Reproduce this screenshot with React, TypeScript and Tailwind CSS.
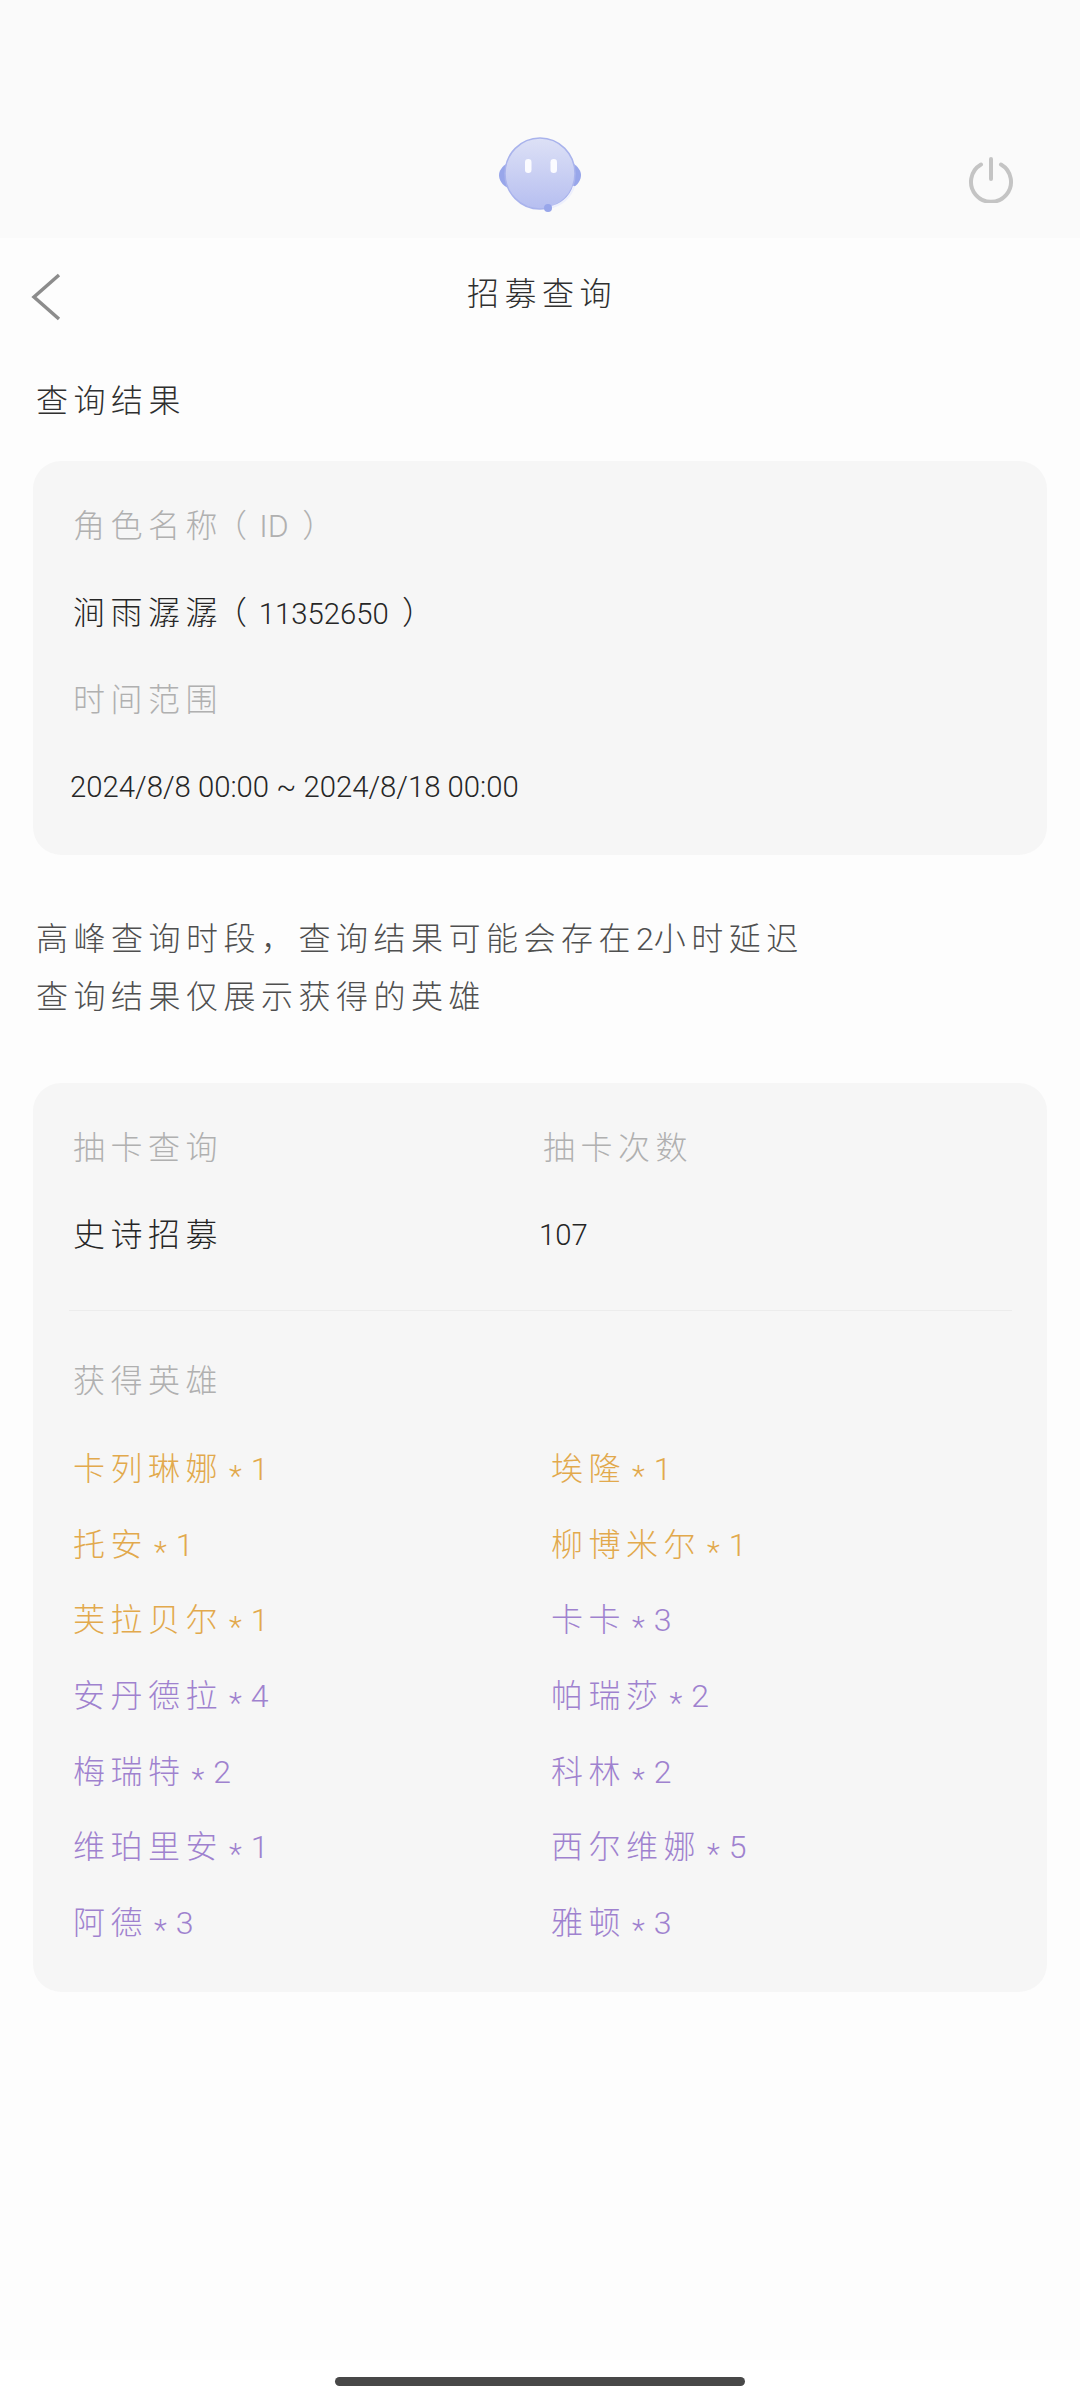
const heroes = [
  { name: '卡列琳娜', count: 1, gold: true },
  { name: '埃隆', count: 1, gold: true },
  { name: '托安', count: 1, gold: true },
  { name: '柳博米尔', count: 1, gold: true },
  { name: '芙拉贝尔', count: 1, gold: true },
  { name: '卡卡', count: 3, gold: false },
  { name: '安丹德拉', count: 4, gold: false },
  { name: '帕瑞莎', count: 2, gold: false },
  { name: '梅瑞特', count: 2, gold: false },
  { name: '科林', count: 2, gold: false },
  { name: '维珀里安', count: 1, gold: false },
  { name: '西尔维娜', count: 5, gold: false },
  { name: '阿德', count: 3, gold: false },
  { name: '雅顿', count: 3, gold: false },
]

function BotLogo() {
  return (
    <svg width="84" height="78" viewBox="0 0 84 78" className="blur-[0.6px]">
      <defs>
        <linearGradient id="head" x1="0" y1="0" x2="0" y2="1">
          <stop offset="0" stopColor="#dde1f6" />
          <stop offset="1" stopColor="#b6bef0" />
        </linearGradient>
      </defs>
      <path d="M10 28C4 31 1 36 1 40c0 5 3 10 9 13z" fill="#98a6ea" />
      <path d="M74 28c6 3 9 8 9 12 0 5-3 10-9 13z" fill="#98a6ea" />
      <ellipse cx="42" cy="38.5" rx="35" ry="35.5" fill="url(#head)" stroke="#a9b3ec" strokeWidth="1.5" />
      <rect x="27" y="24" width="6.5" height="14" rx="3.2" fill="#fbfbff" />
      <rect x="52.5" y="24" width="6.5" height="14" rx="3.2" fill="#fbfbff" />
      <path d="M76 51c-3 11-13 20-26 22" fill="none" stroke="#eef0fc" strokeWidth="2.2" />
      <circle cx="50" cy="73" r="4" fill="#98a6ea" />
    </svg>
  )
}

function PowerIcon() {
  return (
    <svg width="48" height="48" viewBox="0 0 48 48" fill="none" stroke="#c4c4c4" strokeWidth="4" strokeLinecap="round">
      <path d="M24 4v20" />
      <path d="M14 9.5a20 20 0 1 0 20 0" />
    </svg>
  )
}

function BackIcon() {
  return (
    <svg width="30" height="48" viewBox="0 0 30 48" fill="none" stroke="#8c8c8c" strokeWidth="3.5">
      <path d="M28 2 3 24l25 22" />
    </svg>
  )
}

function Num({ children }: { children: React.ReactNode }) {
  return <span className="tracking-normal">{children}</span>
}

export default function App() {
  return (
    <div className="flex h-[2403px] w-[1080px] flex-col overflow-hidden bg-[#fdfdfd] font-['Roboto','Noto_Sans_CJK_SC',sans-serif] text-[32px] font-light tracking-[5.5px] text-[#262626]">
      <header className="grid h-[238px] grid-cols-3 bg-[#fafafa] pt-[135px]">
        <div />
        <div className="flex justify-center">
          <BotLogo />
        </div>
        <div className="flex justify-end pt-[20px] pr-[65px]">
          <PowerIcon />
        </div>
      </header>

      <div className="relative flex h-[116px] items-center justify-center pb-[4px] pl-[4px] text-[#2f2f2f]">
        <div className="absolute top-[35px] left-[31px]">
          <BackIcon />
        </div>
        招募查询
      </div>

      <div className="flex-1 px-[33px]">
        <h2 className="mb-[13px] pl-[3px] leading-[94px] font-light text-[#2f2f2f]">查询结果</h2>

        <section className="h-[394px] rounded-[28px] bg-[#f6f6f6] pt-[22px] pl-[40px]">
          <div className="h-[87px] leading-[87px] text-[#b0b0b0]">
            角色名称<span className="ml-[8px] [font-feature-settings:'halt']">（</span>
            <span className="ml-[-1px] tracking-normal"> ID</span> ）
          </div>
          <div className="h-[87px] leading-[87px]">
            涧雨潺潺<span className="ml-[8px] [font-feature-settings:'halt']">（</span>
            <span className="ml-[-1px] text-[29.3px] tracking-normal"> 11352650</span> ）
          </div>
          <div className="h-[87px] leading-[87px] text-[#b0b0b0]">时间范围</div>
          <div className="-ml-[3px] h-[87px] text-[29.3px] leading-[87px] tracking-normal">
            2024/8/8 00:00 ~ 2024/8/18 00:00
          </div>
        </section>

        <div className="mt-[55px] pl-[3px] leading-[58px] text-[#4f4f4f]">
          <p>
            高峰查询时段，查询结果可能会存在<Num>2</Num>小时延迟
          </p>
          <p>查询结果仅展示获得的英雄</p>
        </div>

        <section className="mt-[57px] h-[909px] rounded-[28px] bg-[#f6f6f6] pt-[22px] pl-[40px]">
          <div className="grid h-[87px] grid-cols-[470px_1fr] leading-[87px] text-[#b0b0b0]">
            <div>抽卡查询</div>
            <div>抽卡次数</div>
          </div>
          <div className="grid h-[87px] grid-cols-[470px_1fr] leading-[87px]">
            <div>史诗招募</div>
            <div className="-ml-[4px] text-[29.3px] tracking-normal">107</div>
          </div>
          <div className="mt-[31px] mr-[35px] -ml-[4px] h-px bg-[#ececec]" />
          <div className="mt-[27px] h-[87px] leading-[87px] text-[#b0b0b0]">获得英雄</div>
          <div className="mt-[7px] grid grid-cols-[478px_1fr]">
            {heroes.map((hero) => (
              <div
                key={hero.name}
                className={
                  hero.gold
                    ? 'h-[75.7px] leading-[75.7px] text-[#e2a94c]'
                    : 'h-[75.7px] leading-[75.7px] text-[#9f82cf]'
                }
              >
                {hero.name}
                <span className="ml-[6px] align-[-6px] text-[30px] tracking-normal">*</span>
                <span className="ml-[9px] tracking-normal">{hero.count}</span>
              </div>
            ))}
          </div>
        </section>
      </div>

      <footer className="flex h-[43px] justify-center bg-white pt-[17px]">
        <div className="h-[9px] w-[410px] rounded-full bg-[#484848]" />
      </footer>
    </div>
  )
}
